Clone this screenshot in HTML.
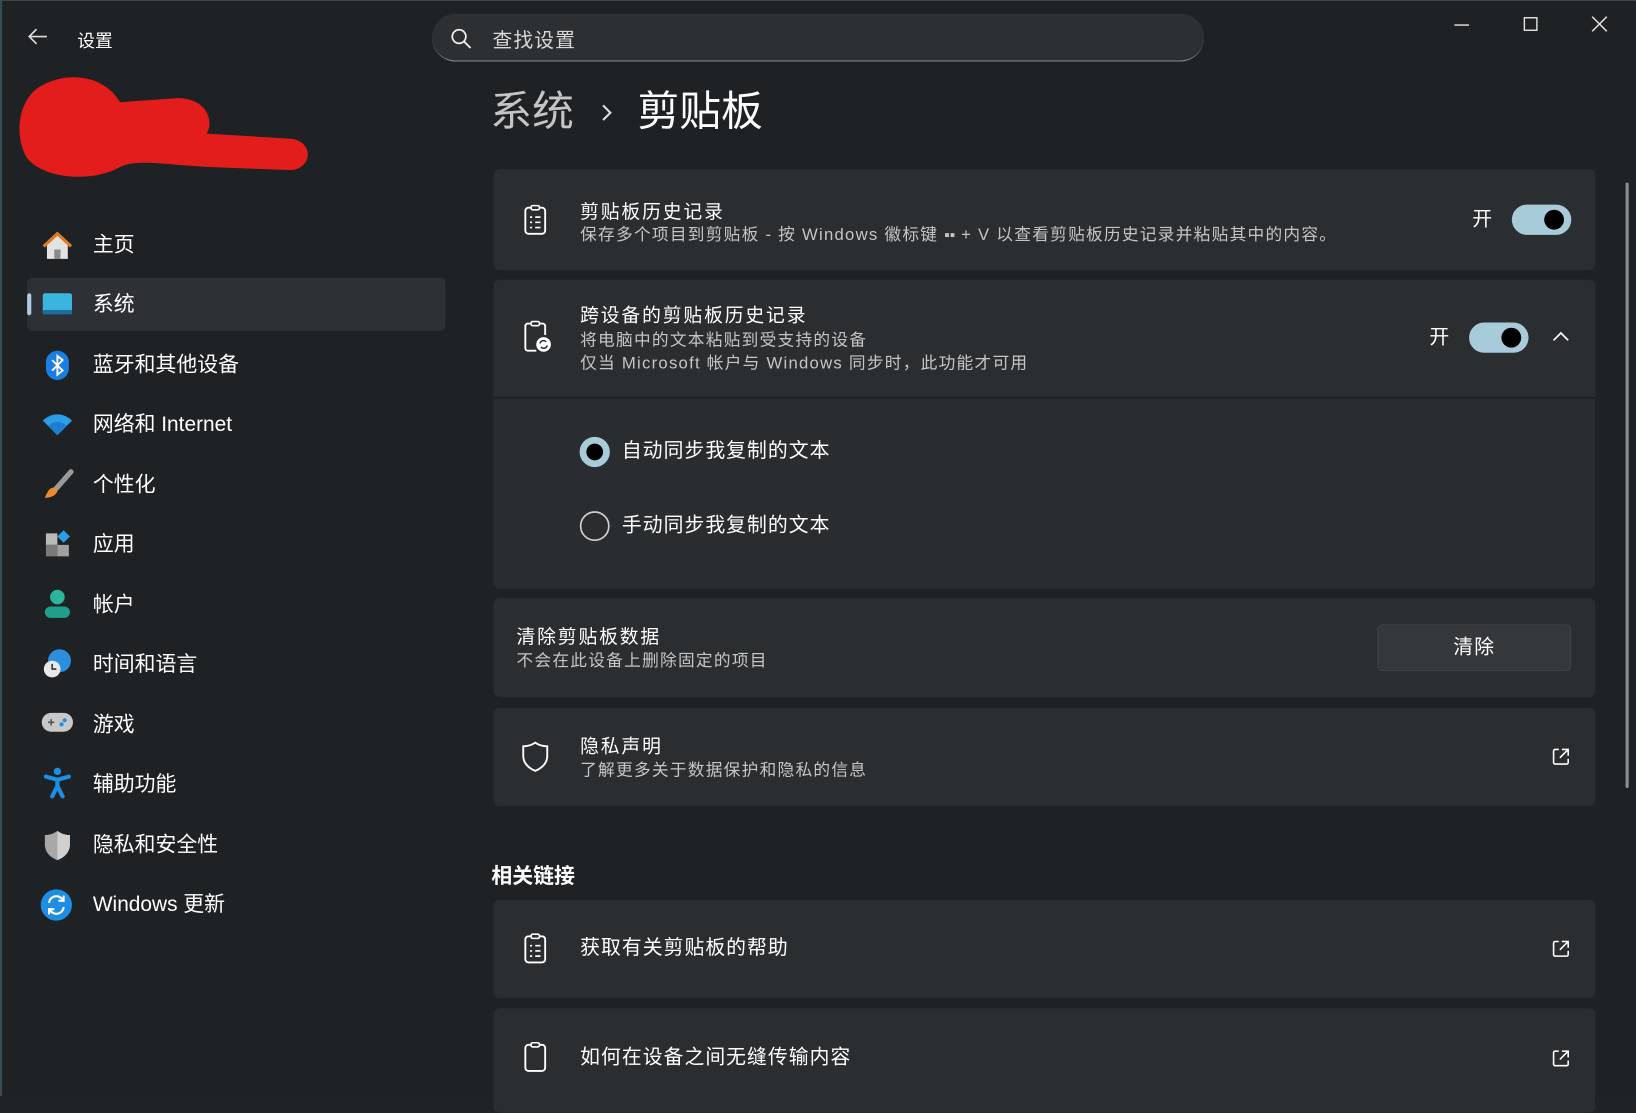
<!DOCTYPE html>
<html><head><meta charset="utf-8">
<style>
*{margin:0;padding:0;box-sizing:border-box}
html,body{width:1636px;height:1096px;overflow:hidden;background:#202326}
body{font-family:"Liberation Sans","Noto Sans CJK SC",sans-serif;color:#fff}
#w{position:absolute;left:0;top:0;width:1568px;height:1050px;transform:scale(1.04337,1.0438);transform-origin:0 0;background:#1f2225;box-shadow:inset 2px 1px 0 #3a4a55}
.a{position:absolute}
.nav{position:absolute;left:89px;font-size:20px;color:#fff;line-height:24px}
.card{position:absolute;left:473px;width:1056px;background:#2b2e31;border-radius:6px}
.t{position:absolute;font-size:18px;color:#fff;line-height:22px;white-space:nowrap;letter-spacing:1.8px}
.s{position:absolute;font-size:16px;color:#c5c5c5;line-height:22px;white-space:nowrap;letter-spacing:1.2px}
.tg{position:absolute;width:57px;height:29px;border-radius:15px;background:#a7cbd8}
.tg:after{content:"";position:absolute;right:7px;top:5px;width:19px;height:19px;border-radius:50%;background:#000}
svg{position:absolute;overflow:visible}
</style></head><body><div id="w">
<svg style="left:26px;top:26px" width="20" height="18"><path d="M19 9H2M9 2L2 9l7 7" stroke="#ddd" stroke-width="1.6" fill="none"/></svg>
<div class="a" style="left:74px;top:25px;font-size:17px">设置</div>
<div class="a" style="left:414px;top:13px;width:740px;height:46px;border-radius:23px;background:#2d3033;border-bottom:1.5px solid #8a8d90"></div>
<svg style="left:432px;top:27px" width="20" height="20"><circle cx="8" cy="8" r="6.5" stroke="#eee" stroke-width="1.7" fill="none"/><path d="M13 13l6 6" stroke="#eee" stroke-width="1.8"/></svg>
<div class="a" style="left:472px;top:24px;font-size:19px;color:#d8d8d8;letter-spacing:1px">查找设置</div>
<svg style="left:1393px;top:15px" width="160" height="20"><path d="M1 9h14" stroke="#ddd" stroke-width="1.4"/><rect x="68" y="2" width="12" height="12" stroke="#ddd" stroke-width="1.4" fill="none"/><path d="M133 1l14 14M147 1l-14 14" stroke="#ddd" stroke-width="1.4"/></svg>
<svg style="left:0;top:0" width="320" height="200"><path d="M40 82 C65 68 100 72 115 98 L170 94 C200 94 205 118 198 128 L280 133 C300 136 300 160 280 163 L200 160 C160 158 130 152 115 160 C90 175 40 172 25 150 C12 125 20 92 40 82Z" fill="#e31c1c"/></svg>
<div class="a" style="left:26px;top:266px;width:401px;height:51px;border-radius:5px;background:#2d3034"></div>
<div class="a" style="left:26px;top:281px;width:4px;height:21px;border-radius:2px;background:#a9cdd9"></div>
<svg style="left:40px;top:220px" width="30" height="30"><path d="M15 2L1 15l2 2 2-2v13h20V15l2 2 2-2z" fill="#e2e2e2"/><path d="M15 2L1 15l2 2L15 6l12 11 2-2z" fill="#e07a1f"/><rect x="12" y="19" width="6" height="9" fill="#8a8a8a"/></svg>
<div class="nav" style="top:223px">主页</div>
<svg style="left:40px;top:281px" width="30" height="22"><rect x="1" y="0" width="28" height="20" rx="2" fill="#3bb5dd"/><rect x="1" y="16" width="28" height="4" fill="#1c6e9c"/></svg>
<div class="nav" style="top:280px">系统</div>
<svg style="left:44px;top:336px" width="22" height="28"><rect width="22" height="28" rx="11" fill="#1a7fe0"/><path d="M6 9l10 10-5 4V5l5 4L6 19" stroke="#fff" stroke-width="1.8" fill="none"/></svg>
<div class="nav" style="top:338px">蓝牙和其他设备</div>
<svg style="left:40px;top:396px" width="30" height="22"><path d="M1 7C9-1 21-1 29 7l-14 14z" fill="#2a9ee6"/><path d="M6 12c5-5 13-5 18 0l-9 9z" fill="#1e7ed0"/></svg>
<div class="nav" style="top:395px">网络和 Internet</div>
<svg style="left:40px;top:450px" width="30" height="30"><path d="M28 2L13 19" stroke="#9a9a9a" stroke-width="5" stroke-linecap="round"/><path d="M12 17c-5 0-7 5-9 10 5 0 10-2 12-6z" fill="#f08a2a"/></svg>
<div class="nav" style="top:453px">个性化</div>
<svg style="left:42px;top:507px" width="28" height="28"><rect x="2" y="4" width="11" height="11" fill="#b9b9b9"/><rect x="2" y="15" width="11" height="11" fill="#7a7a7a"/><rect x="13" y="15" width="11" height="11" fill="#a0a0a0"/><path d="M19 1l6 6-6 6-6-6z" fill="#2a9ee6"/></svg>
<div class="nav" style="top:510px">应用</div>
<svg style="left:42px;top:563px" width="26" height="30"><circle cx="13" cy="9" r="7" fill="#2bb59b"/><rect x="1" y="18" width="24" height="11" rx="5.5" fill="#1f9e8a"/></svg>
<div class="nav" style="top:568px">帐户</div>
<svg style="left:40px;top:621px" width="30" height="30"><circle cx="17" cy="12" r="11" fill="#2b8fde"/><circle cx="10" cy="20" r="8" fill="#e8e8e8"/><path d="M10 15v5h4" stroke="#333" stroke-width="1.5" fill="none"/></svg>
<div class="nav" style="top:625px">时间和语言</div>
<svg style="left:40px;top:683px" width="30" height="22"><rect x="0" y="0" width="30" height="18" rx="9" fill="#c8c8c8"/><path d="M6 9h6M9 6v6" stroke="#555" stroke-width="1.6"/><circle cx="22" cy="7" r="2" fill="#2a8ee0"/><circle cx="19" cy="11" r="2" fill="#2a8ee0"/></svg>
<div class="nav" style="top:683px">游戏</div>
<svg style="left:42px;top:735px" width="26" height="30"><circle cx="13" cy="4" r="3.5" fill="#1d8ee6"/><path d="M2 9l11 3 11-3M13 12v6l-5 10M13 18l5 10" stroke="#1d8ee6" stroke-width="4" fill="none" stroke-linecap="round"/></svg>
<div class="nav" style="top:740px">辅助功能</div>
<svg style="left:42px;top:795px" width="26" height="30"><path d="M13 1C9 4 5 5 1 5v9c0 8 6 13 12 15 6-2 12-7 12-15V5c-4 0-8-1-12-4z" fill="#a8a8a8"/><path d="M13 1v28c6-2 12-7 12-15V5c-4 0-8-1-12-4z" fill="#d0d0d0"/></svg>
<div class="nav" style="top:798px">隐私和安全性</div>
<svg style="left:39px;top:852px" width="30" height="30"><circle cx="15" cy="15" r="15" fill="#1e8ee3"/><path d="M8 13a7 7 0 0 1 13-3M22 17a7 7 0 0 1-13 3" stroke="#fff" stroke-width="2" fill="none"/><path d="M22 6v5h-5M8 24v-5h5" stroke="#fff" stroke-width="2" fill="none"/></svg>
<div class="nav" style="top:855px">Windows 更新</div>
<div class="a" style="left:470px;top:82px;font-size:40px;line-height:50px;color:#c5c5c5">系统</div>
<svg style="left:576px;top:99px" width="12" height="18"><path d="M2 2l7 7-7 7" stroke="#ddd" stroke-width="2" fill="none"/></svg>
<div class="a" style="left:611px;top:82px;font-size:40px;line-height:50px;color:#fff">剪贴板</div>
<div class="card" style="top:162px;height:97px"></div>
<svg style="left:502px;top:196px" width="22" height="30"><rect x="1.5" y="3" width="19" height="25" rx="3" stroke="#fff" stroke-width="1.8" fill="none"/><rect x="7" y="1" width="8" height="4" rx="1.5" fill="#2b2e31" stroke="#fff" stroke-width="1.5"/><path d="M6 12h2M11 12h5M6 17h2M11 17h5M6 22h2M11 22h5" stroke="#fff" stroke-width="1.6"/></svg>
<div class="t" style="left:556px;top:192px">剪贴板历史记录</div>
<div class="s" style="left:556px;top:215px">保存多个项目到剪贴板 - 按 Windows 徽标键 <span style="font-size:15px;letter-spacing:0">▪▪</span> + V 以查看剪贴板历史记录并粘贴其中的内容。</div>
<div class="t" style="left:1411px;top:200px;font-size:19px">开</div>
<div class="tg" style="left:1449px;top:196px"></div>
<div class="card" style="top:268px;height:296px;background:#2a2d30"></div>
<div class="card" style="top:268px;height:112px;border-radius:6px 6px 0 0"></div>
<div class="a" style="left:473px;top:380px;width:1056px;height:2px;background:#1f2225"></div>
<svg style="left:502px;top:307px" width="26" height="32"><path d="M12 29H4a2.5 2.5 0 0 1-2.5-2.5v-21A2.5 2.5 0 0 1 4 3h14a2.5 2.5 0 0 1 2.5 2.5V14" stroke="#fff" stroke-width="1.8" fill="none"/><rect x="7" y="1" width="8" height="4" rx="1.5" fill="#2b2e31" stroke="#fff" stroke-width="1.5"/><circle cx="19" cy="23" r="7" fill="#fff"/><path d="M15.5 22a3.5 3.5 0 0 1 6-1.5M22.5 24a3.5 3.5 0 0 1-6 1.5" stroke="#2b2e31" stroke-width="1.5" fill="none"/></svg>
<div class="t" style="left:556px;top:291px">跨设备的剪贴板历史记录</div>
<div class="s" style="left:556px;top:316px">将电脑中的文本粘贴到受支持的设备</div>
<div class="s" style="left:556px;top:338px">仅当 Microsoft 帐户与 Windows 同步时，此功能才可用</div>
<div class="t" style="left:1370px;top:313px;font-size:19px">开</div>
<div class="tg" style="left:1408px;top:309px"></div>
<svg style="left:1488px;top:318px" width="16" height="10"><path d="M1 8l7-7 7 7" stroke="#fff" stroke-width="1.6" fill="none"/></svg>
<svg style="left:555px;top:418px" width="30" height="30"><circle cx="15" cy="15" r="14.5" fill="#a7cbd8"/><circle cx="15" cy="15" r="8" fill="#000"/></svg>
<div class="t" style="left:596px;top:422px;font-size:19px;letter-spacing:1px">自动同步我复制的文本</div>
<svg style="left:555px;top:489px" width="30" height="30"><circle cx="15" cy="15" r="13.5" stroke="#cfcfcf" stroke-width="1.6" fill="none"/></svg>
<div class="t" style="left:596px;top:493px;font-size:19px;letter-spacing:1px">手动同步我复制的文本</div>
<div class="card" style="top:573px;height:95px"></div>
<div class="t" style="left:495px;top:599px">清除剪贴板数据</div>
<div class="s" style="left:495px;top:623px">不会在此设备上删除固定的项目</div>
<div class="a" style="left:1320px;top:598px;width:186px;height:45px;border-radius:5px;background:#35383b;border:1px solid #3e4144;text-align:center;line-height:43px;font-size:19px;letter-spacing:1px">清除</div>
<div class="card" style="top:678px;height:94px"></div>
<svg style="left:500px;top:710px" width="26" height="30"><path d="M13 1.5C9.5 4 5.5 5 1.5 5v9c0 7 5 12 11.5 14.5C19.5 26 24.5 21 24.5 14V5c-4 0-8-1-11.5-3.5z" stroke="#fff" stroke-width="1.8" fill="none"/></svg>
<div class="t" style="left:556px;top:704px">隐私声明</div>
<div class="s" style="left:556px;top:728px">了解更多关于数据保护和隐私的信息</div>
<svg style="left:1487px;top:716px" width="18" height="18"><path d="M7 2H3.5A1.5 1.5 0 0 0 2 3.5v11A1.5 1.5 0 0 0 3.5 16h11a1.5 1.5 0 0 0 1.5-1.5V11M10 2h6v6M16 2L8 10" stroke="#fff" stroke-width="1.5" fill="none"/></svg>
<div class="a" style="left:471px;top:823px;font-size:20px;font-weight:bold">相关链接</div>
<div class="card" style="top:862px;height:94px"></div>
<svg style="left:502px;top:894px" width="22" height="30"><rect x="1.5" y="3" width="19" height="25" rx="3" stroke="#fff" stroke-width="1.8" fill="none"/><rect x="7" y="1" width="8" height="4" rx="1.5" fill="#2b2e31" stroke="#fff" stroke-width="1.5"/><path d="M6 12h2M11 12h5M6 17h2M11 17h5M6 22h2M11 22h5" stroke="#fff" stroke-width="1.6"/></svg>
<div class="t" style="left:556px;top:898px;font-size:19px;letter-spacing:1px">获取有关剪贴板的帮助</div>
<svg style="left:1487px;top:900px" width="18" height="18"><path d="M7 2H3.5A1.5 1.5 0 0 0 2 3.5v11A1.5 1.5 0 0 0 3.5 16h11a1.5 1.5 0 0 0 1.5-1.5V11M10 2h6v6M16 2L8 10" stroke="#fff" stroke-width="1.5" fill="none"/></svg>
<div class="card" style="top:966px;height:100px"></div>
<svg style="left:502px;top:998px" width="22" height="30"><rect x="1.5" y="3" width="19" height="25" rx="3" stroke="#fff" stroke-width="1.8" fill="none"/><rect x="7" y="1" width="8" height="4" rx="1.5" fill="#2b2e31" stroke="#fff" stroke-width="1.5"/></svg>
<div class="t" style="left:556px;top:1003px;font-size:19px;letter-spacing:1px">如何在设备之间无缝传输内容</div>
<svg style="left:1487px;top:1005px" width="18" height="18"><path d="M7 2H3.5A1.5 1.5 0 0 0 2 3.5v11A1.5 1.5 0 0 0 3.5 16h11a1.5 1.5 0 0 0 1.5-1.5V11M10 2h6v6M16 2L8 10" stroke="#fff" stroke-width="1.5" fill="none"/></svg>
<div class="a" style="left:1558px;top:175px;width:3px;height:580px;border-radius:2px;background:#8c8f92"></div>
</div></body></html>
